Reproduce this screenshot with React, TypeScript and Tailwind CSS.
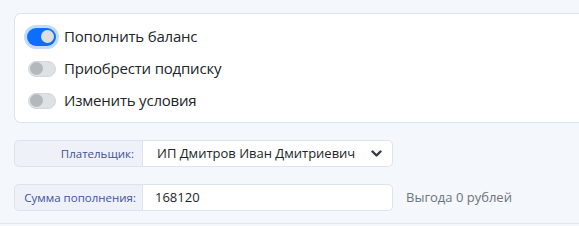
const OPTIONS = [
  { label: "Пополнить баланс", on: true },
  { label: "Приобрести подписку", on: false },
  { label: "Изменить условия", on: false },
];

function Toggle({ on }: { on: boolean }) {
  if (on) {
    return (
      <span className="flex h-[18px] w-[30px] items-center justify-end rounded-full bg-[#0d6efd] pr-[2px] ring-[3px] ring-[#c2dbfe]">
        <span className="h-[13px] w-[13px] rounded-full bg-[#dedede]" />
      </span>
    );
  }
  return (
    <span className="flex h-[16px] w-[28px] items-center rounded-full border border-[#d3d7db] bg-[#dfe2e5] pl-[1px]">
      <span className="h-[13px] w-[13px] rounded-full bg-[#b3b8bd]" />
    </span>
  );
}

export default function App() {
  return (
    <div
      className="h-[226px] w-[579px] overflow-hidden bg-[#f4f7fb] text-[#212529]"
      style={{ fontFamily: '"Open Sans", "Noto Sans", sans-serif' }}
    >
      <div className="pl-[14px] pt-[13px]">
        <div className="flex h-[110px] flex-col gap-[13px] rounded-l-[7px] border border-r-0 border-[#dbe5f0] bg-white pl-[12px] pt-[13px]">
          {OPTIONS.map((o) => (
            <div key={o.label} className="flex h-[19px] items-center gap-[8px]">
              <span className="flex w-[29px] justify-center">
                <Toggle on={o.on} />
              </span>
              <span className="text-[15px] leading-none tracking-[-0.2px]">{o.label}</span>
            </div>
          ))}
        </div>
      </div>

      <div className="flex flex-col gap-[17px] pl-[14px] pt-[17px]">
        <div className="flex h-[27px] items-stretch">
          <div className="flex w-[129px] items-center justify-end rounded-l-[5px] border border-[#dbe3ec] bg-[#eef2f8] pr-[8px] text-[11.5px] text-[#43509a]">
            Плательщик:
          </div>
          <div className="flex w-[250px] items-center justify-between rounded-r-[5px] border border-l-0 border-[#dbe3ec] bg-white pl-[14px] pr-[10px] text-[13px]">
            <span>ИП Дмитров Иван Дмитриевич</span>
            <svg width="11" height="8" viewBox="0 0 11 8">
              <path d="M1.5 1.5 L5.5 5.5 L9.5 1.5" fill="none" stroke="#343a40" strokeWidth="2.4" strokeLinecap="round" strokeLinejoin="round" />
            </svg>
          </div>
        </div>

        <div className="flex h-[27px] items-stretch">
          <div className="flex w-[129px] items-center justify-end rounded-l-[5px] border border-[#dbe3ec] bg-[#eef2f8] pr-[6px] text-[11.5px] text-[#43509a]">
            Сумма пополнения:
          </div>
          <div className="flex w-[250px] items-center rounded-r-[5px] border border-l-0 border-[#dbe3ec] bg-white pl-[12px] text-[13px]">
            168120
          </div>
          <div className="flex items-center pl-[13px] text-[13px] text-[#6c757d]">Выгода 0 рублей</div>
        </div>
      </div>

      <div className="mt-[12px] border-t border-[#e2e8f0]" />
    </div>
  );
}
